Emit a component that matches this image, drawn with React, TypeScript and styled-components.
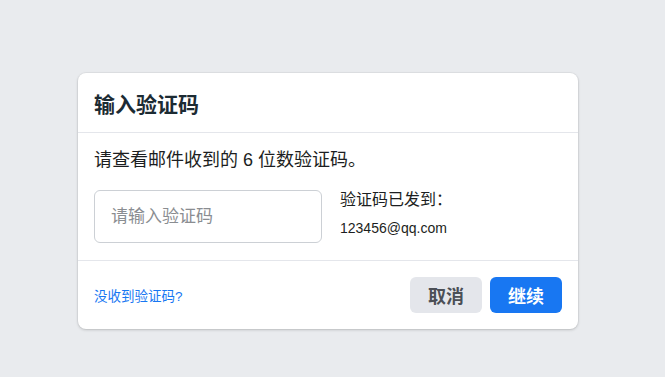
import React from "react";
import styled, { createGlobalStyle } from "styled-components";

const GlobalStyle = createGlobalStyle`
  html, body {
    margin: 0;
    padding: 0;
    background: #e9ebee;
  }
  body {
    font-family: "Liberation Sans", "Noto Sans CJK SC", sans-serif;
  }
  * { box-sizing: border-box; }
`;

const Page = styled.div`
  width: 665px;
  height: 377px;
  padding: 73px 0 0 78px;
  background: #e9ebee;
`;

const Card = styled.div`
  width: 500px;
  background: #ffffff;
  border-radius: 8px;
  box-shadow: 0 1px 3px rgba(0, 0, 0, 0.18), 0 0 0 1px rgba(0, 0, 0, 0.03);
  display: flex;
  flex-direction: column;
`;

const Header = styled.div`
  height: 60px;
  padding: 0 16px;
  display: flex;
  align-items: center;
  border-bottom: 1px solid #e4e6eb;
`;

const Title = styled.h2`
  margin: 0;
  font-size: 21px;
  line-height: 26px;
  font-weight: 700;
  color: #1c2b33;
  font-family: "Noto Sans CJK SC", sans-serif;
`;

const Body = styled.div`
  padding: 16px 16px 17px 16px;
  border-bottom: 1px solid #e4e6eb;
  display: flex;
  flex-direction: column;
  gap: 19px;
`;

const Lead = styled.p`
  margin: 0;
  font-size: 18px;
  line-height: 22px;
  color: #1c1e21;
`;

const Row = styled.div`
  display: flex;
  align-items: flex-start;
  gap: 18px;
`;

const CodeInput = styled.input`
  width: 228px;
  height: 53px;
  padding: 0 16px;
  border: 1px solid #ccd0d5;
  border-radius: 6px;
  font-size: 17px;
  font-family: "Liberation Sans", "Noto Sans CJK SC", sans-serif;
  color: #1c1e21;
  outline: none;
  &::placeholder {
    color: #8a8d91;
  }
`;

const SentInfo = styled.div`
  display: flex;
  flex-direction: column;
  gap: 9px;
`;

const SentLabel = styled.div`
  font-size: 16px;
  line-height: 20px;
  color: #1c1e21;
`;

const SentEmail = styled.div`
  font-size: 14px;
  line-height: 18px;
  color: #1c1e21;
`;

const Footer = styled.div`
  padding: 16px;
  display: flex;
  align-items: center;
  justify-content: space-between;
`;

const HelpLink = styled.a`
  font-size: 13.5px;
  line-height: 16px;
  color: #1877f2;
  text-decoration: none;
  cursor: pointer;
  margin-top: 3px;
`;

const Actions = styled.div`
  display: flex;
  gap: 8px;
`;

const Button = styled.button<{ $primary?: boolean }>`
  width: 72px;
  height: 36px;
  padding: 0;
  border: none;
  border-radius: 6px;
  font-family: "Noto Sans CJK SC", sans-serif;
  font-size: 18px;
  font-weight: 700;
  line-height: 22px;
  cursor: pointer;
  background: ${(p) => (p.$primary ? "#1877f2" : "#e4e6eb")};
  color: ${(p) => (p.$primary ? "#ffffff" : "#4b4f56")};
`;

export default function App() {
  return (
    <>
      <GlobalStyle />
      <Page>
        <Card>
          <Header>
            <Title>输入验证码</Title>
          </Header>
          <Body>
            <Lead>请查看邮件收到的 6 位数验证码。</Lead>
            <Row>
              <CodeInput placeholder="请输入验证码" />
              <SentInfo>
                <SentLabel>验证码已发到：</SentLabel>
                <SentEmail>123456@qq.com</SentEmail>
              </SentInfo>
            </Row>
          </Body>
          <Footer>
            <HelpLink>没收到验证码?</HelpLink>
            <Actions>
              <Button>取消</Button>
              <Button $primary>继续</Button>
            </Actions>
          </Footer>
        </Card>
      </Page>
    </>
  );
}
